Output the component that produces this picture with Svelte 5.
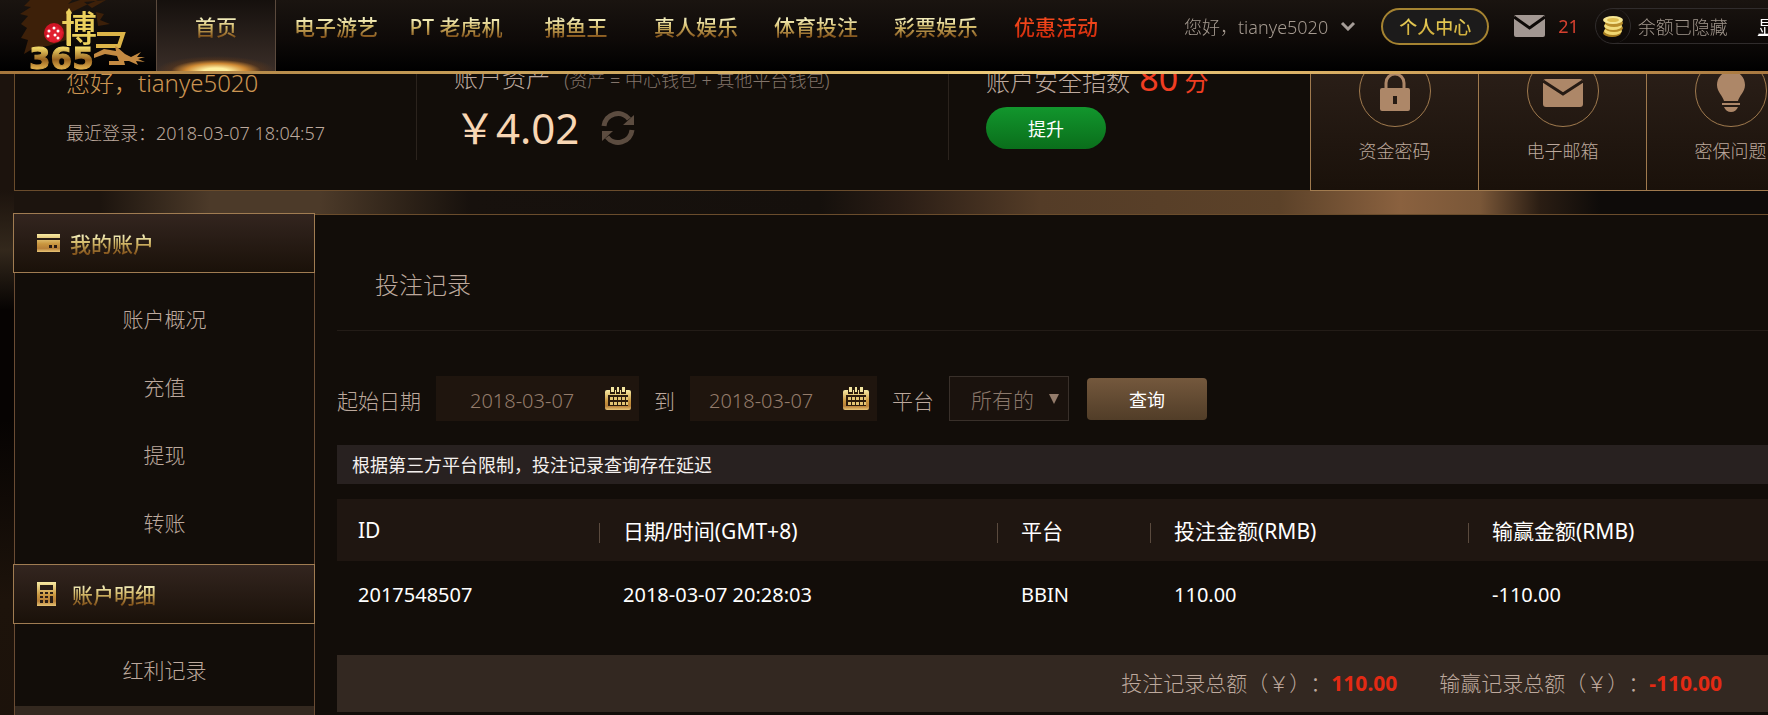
<script lang="ts">
  type MenuGroup = { icon: "card" | "calculator"; title: string; items: string[] };

  const navItems = [
    "首页",
    "电子游艺",
    "PT 老虎机",
    "捕鱼王",
    "真人娱乐",
    "体育投注",
    "彩票娱乐",
    "优惠活动",
  ];

  const securityTiles = [
    { icon: "lock", label: "资金密码" },
    { icon: "mail", label: "电子邮箱" },
    { icon: "bulb", label: "密保问题" },
  ];

  const menu: MenuGroup[] = [
    { icon: "card", title: "我的账户", items: ["账户概况", "充值", "提现", "转账"] },
    { icon: "calculator", title: "账户明细", items: ["红利记录", "投注记录"] },
  ];

  const columns = ["ID", "日期/时间(GMT+8)", "平台", "投注金额(RMB)", "输赢金额(RMB)"];

  const records = [
    { id: "2017548507", time: "2018-03-07 20:28:03", platform: "BBIN", bet: "110.00", win: "-110.00" },
  ];

  const username = "tianye5020";
  let activeNav = $state("首页");
  let activeMenu = $state("投注记录");
  let startDate = $state("2018-03-07");
  let endDate = $state("2018-03-07");
  let platform = $state("所有的");
</script>

{#snippet calendar()}
  <svg width="28" height="24" viewBox="0 0 28 24" aria-hidden="true">
    <rect x="1" y="3" width="26" height="20" rx="2" fill="url(#gold)" />
    <rect x="4" y="8" width="20" height="11" fill="#2b1b0c" />
    <g fill="#2b1b0c">
      <rect x="6" y="1" width="5" height="6" /><rect x="12" y="1" width="4" height="6" /><rect x="17" y="1" width="5" height="6" />
    </g>
    <g fill="#f3e5a0">
      <rect x="7" y="0" width="3" height="5" /><rect x="18" y="0" width="3" height="5" /><rect x="13" y="0" width="2" height="5" />
    </g>
    <g fill="#e3c473">
      {#each [0, 1, 2, 3] as col}
        <rect x={6 + col * 4} y="10" width="3" height="3" />
        <rect x={6 + col * 4} y="15" width="3" height="3" />
      {/each}
      <rect x="22" y="10" width="2" height="3" /><rect x="22" y="15" width="2" height="3" />
    </g>
  </svg>
{/snippet}

<header class="topbar">
  <a class="logo" href="#home" aria-label="博365">
    <svg width="156" height="71" viewBox="0 0 156 71">
      <defs>
        <linearGradient id="gold" x1="0" y1="0" x2="0" y2="1">
          <stop offset="0" stop-color="#f8eba4" />
          <stop offset="0.55" stop-color="#c9963f" />
          <stop offset="0.8" stop-color="#b77f38" />
          <stop offset="1" stop-color="#e8c576" />
        </linearGradient>
        <linearGradient id="digits" x1="0" y1="0" x2="0" y2="1">
          <stop offset="0.2" stop-color="#f5dc6a" />
          <stop offset="0.55" stop-color="#9a6420" />
          <stop offset="0.8" stop-color="#e2b04c" />
        </linearGradient>
      </defs>
      <path
        d="M30 0L24 6L31 7L20 14L28 16L21 24L27 28L21 38L28 40L24 54L34 48L48 46L66 40L72 12L84 6L98 0H80L68 4L72 0ZM96 12L104 14L100 20L110 24L98 26ZM84 2L106 0L92 8Z"
        fill="#3d2009"
      />
      <text x="61" y="42" class="logo-name" fill="#ecd05d">博</text>
      <path d="M67 14H71V46H67Z" fill="#ecd05d" />
      <path d="M69 8L72 13L69 16L66 13Z" fill="#ecd05d" />
      <path d="M97 34H123L119 46H96" fill="none" stroke="#dcb448" stroke-width="4" />
      <path
        d="M117 47L125 54L131 57L141 52L137 57L145 57L138 59L145 62L136 61L138 65L129 61H124L125 65H109V61H119L117 56L105 54L94 58V54L104 49L116 51L115 46Z"
        fill="#c48a42"
      />
      <text x="29" y="69" class="logo-digits" fill="url(#digits)" stroke="url(#digits)">365</text>
      <circle cx="54" cy="33" r="10" fill="#cf1424" />
      <path d="M46 30L57 26L63 32L60 41L50 42Z" fill="#ed2638" opacity="0.6" />
      <g fill="#fff">
        <circle cx="49" cy="31" r="1.5" /><circle cx="48" cy="36" r="1.5" /><circle cx="54" cy="28" r="1.5" />
        <circle cx="58" cy="31" r="1.5" /><circle cx="55" cy="35" r="1.5" /><circle cx="58" cy="38" r="1.5" />
      </g>
    </svg>
  </a>

  <nav class="nav">
    {#each navItems as item}
      <a
        href="#nav"
        class="nav-item"
        class:active={item === activeNav}
        class:promo={item === "优惠活动"}
        onclick={() => (activeNav = item)}><span>{item}</span></a
      >
    {/each}
  </nav>

  <div class="tools">
    <button class="user">
      <span>您好，{username}</span>
      <svg width="16" height="10" viewBox="0 0 16 10"><path d="M2 2L8 8L14 2" fill="none" stroke="#a59d98" stroke-width="3" /></svg>
    </button>
    <button class="center-btn"><span>个人中心</span></button>
    <a class="mail" href="#mail">
      <svg width="31" height="22" viewBox="0 0 31 22">
        <rect width="31" height="22" rx="2" fill="#a29792" />
        <path d="M0 2L15.500 13L31 2" fill="none" stroke="#0d0907" stroke-width="3" />
      </svg>
      <span>21</span>
    </a>
    <div class="balance">
      <span class="coin">
        <svg width="24" height="24" viewBox="0 0 24 24">
          <ellipse cx="11" cy="19" rx="9" ry="4" fill="#a87d20" />
          <ellipse cx="12" cy="17" rx="9" ry="4" fill="#f0d670" />
          <ellipse cx="13" cy="14" rx="9" ry="4" fill="#b58a28" />
          <ellipse cx="12" cy="12" rx="9" ry="4" fill="#f2dc7c" />
          <ellipse cx="13" cy="9" rx="9" ry="4" fill="#b98e2c" />
          <ellipse cx="12" cy="6" rx="10" ry="4" fill="#f6e694" />
          <ellipse cx="12" cy="6" rx="6" ry="2" fill="#dfbd50" />
        </svg>
      </span>
      <span>余额已隐藏</span>
      <button class="reveal">显示</button>
    </div>
  </div>
</header>

<div class="page">
  <section class="summary">
    <div class="profile">
      <div class="hello">您好，{username}</div>
      <div class="last-login">最近登录：2018-03-07 18:04:57</div>
    </div>

    <div class="assets">
      <div class="heading">账户资产 <small>(资产 = 中心钱包 + 其他平台钱包)</small></div>
      <div class="amount">
        <span>￥4.02</span>
        <button class="refresh" aria-label="刷新">
          <svg width="34" height="34" viewBox="0 0 34 34">
            <path d="M3 15A14 14 0 0 1 28 8M31 19A14 14 0 0 1 6 26" fill="none" stroke="#5c4c40" stroke-width="5" />
            <path d="M33 4V14H22ZM1 30V20H12Z" fill="#5c4c40" />
          </svg>
        </button>
      </div>
    </div>

    <div class="safety">
      <div class="heading">账户安全指数 <b>80</b> <i>分</i></div>
      <button class="upgrade">提升</button>
    </div>

    {#each securityTiles as tile}
      <a class="tile" href="#security">
        <span class="ring">
          <svg width="44" height="44" viewBox="0 0 44 44" fill="#ad8768">
            {#if tile.icon === "lock"}
              <path d="M13 20V14A9 9 0 0 1 31 14V20" fill="none" stroke="#ad8768" stroke-width="3" />
              <path fill-rule="evenodd" d="M9 19H35A2 2 0 0 1 37 21V40A2 2 0 0 1 35 42H9A2 2 0 0 1 7 40V21A2 2 0 0 1 9 19ZM20 27V35H24V27Z" />
            {:else if tile.icon === "mail"}
              <rect x="2" y="10" width="40" height="28" rx="3" />
              <path d="M2 12L22 25L42 12" fill="none" stroke="#261b14" stroke-width="3" />
            {:else}
              <path d="M22 2C13 2 8 9 8 16C8 23 14 27 15 32H29C30 27 36 23 36 16C36 9 31 2 22 2ZM13 34H31V36H13ZM15 38H29C28 41 25 43 22 43C19 43 16 41 15 38Z" />
            {/if}
          </svg>
        </span>
        <span>{tile.label}</span>
      </a>
    {/each}
  </section>

  <div class="body">
    <aside class="sidebar">
      {#each menu as group}
        <h2 class="menu-title {group.icon}">
          {#if group.icon === "card"}
            <svg width="23" height="18" viewBox="0 0 23 18">
              <path d="M0 0H23V4H0ZM0 6H23V18H0Z" fill="url(#gold)" />
              <path d="M12 11H15V14H12ZM17 11H20V14H17Z" fill="#2a1b12" />
            </svg>
          {:else}
            <svg width="19" height="24" viewBox="0 0 19 24">
              <rect width="19" height="24" fill="url(#gold)" />
              <path d="M3 3H16V8H3ZM3 10H6V12H3ZM8 10H11V12H8ZM13 10H16V12H13ZM3 14H6V16H3ZM8 14H11V16H8ZM3 18H6V21H3ZM8 18H11V21H8ZM13 14H16V21H13Z" fill="#2a1e16" />
            </svg>
          {/if}
          <span>{group.title}</span>
        </h2>
        <ul>
          {#each group.items as item}
            <li class:current={item === activeMenu}>
              <a href="#menu" onclick={() => (activeMenu = item)}>{item}</a>
            </li>
          {/each}
        </ul>
      {/each}
    </aside>

    <main class="content">
      <h1>投注记录</h1>

      <form class="filters" onsubmit={(e) => e.preventDefault()}>
        <label for="start">起始日期</label>
        <div class="date-field wide">
          <input id="start" type="text" bind:value={startDate} />
          {@render calendar()}
        </div>
        <label for="end">到</label>
        <div class="date-field">
          <input id="end" type="text" bind:value={endDate} />
          {@render calendar()}
        </div>
        <label for="platform">平台</label>
        <div class="select-field">
          <select id="platform" bind:value={platform}>
            <option>所有的</option>
            <option>BBIN</option>
          </select>
        </div>
        <button class="search" type="submit">查询</button>
      </form>

      <p class="notice">根据第三方平台限制，投注记录查询存在延迟</p>

      <table>
        <colgroup>
          <col class="c-id" /><col class="c-time" /><col class="c-platform" /><col class="c-bet" /><col />
        </colgroup>
        <thead>
          <tr>
            {#each columns as column}
              <th>{column}</th>
            {/each}
          </tr>
        </thead>
        <tbody>
          {#each records as record}
            <tr>
              <td>{record.id}</td>
              <td>{record.time}</td>
              <td>{record.platform}</td>
              <td>{record.bet}</td>
              <td>{record.win}</td>
            </tr>
          {/each}
        </tbody>
      </table>

      <div class="totals">
        <span>投注记录总额（￥）：<b>110.00</b></span>
        <span>输赢记录总额（￥）：<b>-110.00</b></span>
      </div>
    </main>
  </div>
</div>

<style>
  :global(body) {
    overflow: hidden;
    background:
      linear-gradient(#1c130d 190px, #33281c 250px, #060302 310px, #060302 420px, #1d130b 600px, #1a110b) 0 0 / 14px 100% no-repeat,
      linear-gradient(90deg, #1c140e 100px, #4c3a29 210px, #4c3a29 320px, #2c2117 410px, #17110d 470px, #15100c 820px, #2a1d15 900px, #543c27 1040px, #5c4229 1280px, #8a613f 1400px, #7a5738 1480px, #2a1d13 1540px, #0e0b09 1600px);
  }

  :global(body),
  button,
  input,
  select {
    font-family: "Noto Sans", "Noto Sans CJK SC", sans-serif;
    font-weight: 300;
  }

  a {
    color: inherit;
    text-decoration: none;
  }

  button {
    padding: 0;
    border: 0;
    background: transparent;
    color: inherit;
    cursor: pointer;
  }

  svg {
    display: block;
    flex: none;
  }

  .topbar {
    position: fixed;
    inset: 0 0 auto;
    z-index: 10;
    display: flex;
    height: 71px;
    overflow: hidden;
    white-space: nowrap;
    background: linear-gradient(#1a1410, #0e0a08 55%, #000);
    border-bottom: 3px solid;
    border-image: linear-gradient(90deg, #a5763c, #c39a55 25%, #f0ce7e 60%, #c89852 85%, #a87840) 1;
  }

  .logo-name {
    font-size: 36px;
    font-weight: 500;
  }

  .logo-digits {
    font-family: "DejaVu Sans", sans-serif;
    font-size: 31px;
    font-weight: 700;
  }

  .nav {
    display: flex;
  }

  .nav-item {
    flex: none;
    box-sizing: border-box;
    width: 120px;
    padding-top: 11px;
    font-size: 21px;
    font-weight: 500;
    line-height: 32px;
    text-align: center;
  }

  .nav-item span,
  .center-btn span,
  .menu-title span {
    color: transparent;
    background: linear-gradient(#f2ecb8 25%, #d3b968 50%, #85551c 85%);
    background-clip: text;
  }

  .nav-item.active {
    border: solid #5b4a3d;
    border-width: 0 1px;
    background:
      radial-gradient(ellipse 60px 15px at 50% 100%, #fff0a0 20%, #d08a34 50%, #6a3d1866 75%, transparent),
      linear-gradient(#15100d, #3a2e28);
  }

  .nav-item.promo span {
    background: linear-gradient(#f4481c 30%, #c92408);
    background-clip: text;
  }

  .tools {
    display: flex;
    align-items: center;
    height: 52px;
    margin-left: 68px;
    font-size: 18px;
    color: #a4998f;
  }

  .user {
    display: flex;
    align-items: center;
    gap: 12px;
    font-size: 18px;
  }

  .center-btn {
    flex: none;
    width: 108px;
    height: 37px;
    margin: 0 25px;
    border: 2px solid #a58331;
    border-radius: 19px;
    background: #1c1b1b;
    font-size: 18px;
    font-weight: 500;
  }

  .center-btn span {
    background: linear-gradient(#f0d860, #c9a535);
    background-clip: text;
  }

  .mail {
    display: flex;
    align-items: center;
    gap: 13px;
    font-weight: 400;
    color: #d5402f;
  }

  .balance {
    display: flex;
    align-items: center;
    width: 240px;
    height: 34px;
    margin-left: 16px;
    border: 1px solid #302c2c;
    border-radius: 18px;
  }

  .coin {
    display: grid;
    place-items: center;
    width: 34px;
    height: 34px;
    margin-right: 7px;
    border-right: 1px solid #302c2c;
    border-radius: 18px;
  }

  .reveal {
    margin-left: 30px;
    font-size: 18px;
    font-weight: 400;
    color: #fff;
    text-decoration: underline;
  }

  .page {
    padding-left: 14px;
    overflow: hidden;
  }

  .summary {
    display: grid;
    grid-template-columns: 402px 532px 361px repeat(3, 168px);
    height: 190px;
    border: solid #6a4c2c;
    border-width: 0 0 1px 1px;
    background: #120d09;
    color: #bda99d;
    white-space: nowrap;
  }

  .profile,
  .assets {
    height: 160px;
    border-right: 1px solid #2b231d;
  }

  .profile {
    padding-left: 51px;
    box-sizing: border-box;
  }

  .hello {
    padding-top: 65px;
    font-size: 24px;
    line-height: 36px;
    color: #cc9552;
  }

  .last-login {
    margin-top: 18px;
    font-size: 18px;
    line-height: 28px;
  }

  .heading {
    height: 36px;
    padding-top: 60px;
    font-size: 24px;
    line-height: 36px;
  }

  .heading small {
    margin-left: 8px;
    font-size: 18px;
    color: #83756b;
  }

  .assets,
  .safety {
    box-sizing: border-box;
    padding-left: 37px;
  }

  .amount {
    display: flex;
    align-items: center;
    gap: 22px;
    height: 64px;
    font-size: 42px;
    font-weight: 400;
    color: #f8d6b4;
  }

  .amount span {
    padding-bottom: 6px;
  }

  .heading b {
    margin-left: 3px;
    font-size: 34px;
    font-weight: 400;
    color: #f03e22;
  }

  .heading i {
    font-style: normal;
    font-weight: 400;
    color: #f03e22;
  }

  .upgrade {
    display: block;
    width: 120px;
    height: 42px;
    margin-top: 11px;
    border-radius: 21px;
    background: linear-gradient(#12962d, #0a6e1b);
    font-size: 18px;
    font-weight: 400;
    color: #fff;
  }

  .tile {
    display: flex;
    flex-direction: column;
    align-items: center;
    gap: 10px;
    box-sizing: border-box;
    height: 190px;
    padding-top: 55px;
    border-left: 1px solid #a07a4e;
    background: linear-gradient(#33261f, #1a110a);
    font-size: 18px;
    line-height: 28px;
    box-shadow: 0 1px #a07a4e;
  }

  .ring {
    display: grid;
    place-items: center;
    box-sizing: border-box;
    width: 72px;
    height: 72px;
    border: 1px solid #a07a4e;
    border-radius: 50%;
  }

  .body {
    display: flex;
    margin-top: 23px;
    min-height: 100vh;
    border-top: 1px solid #6a4c2c;
    background: #120d09;
  }

  .sidebar {
    flex: none;
    box-sizing: border-box;
    width: 301px;
    border: solid #6a4c34;
    border-width: 0 1px;
  }

  .menu-title {
    display: flex;
    align-items: center;
    gap: 10px;
    box-sizing: border-box;
    height: 60px;
    margin: -2px -1px 0 -2px;
    padding-left: 23px;
    border: 1px solid #a07c52;
    background: linear-gradient(#33251f, #1a1109);
    font-size: 21px;
    font-weight: 500;
  }

  .menu-title.calculator {
    gap: 16px;
  }

  ul {
    margin: 0;
    padding: 12px 0 9px;
    list-style: none;
  }

  li {
    font-size: 21px;
    line-height: 68px;
    text-align: center;
    color: #bda99d;
  }

  li a {
    display: block;
  }

  .current {
    margin-top: 2px;
    background: #33281f;
  }

  .content {
    flex: 1;
    min-width: 0;
    padding-left: 22px;
    color: #bda99d;
  }

  h1 {
    margin: 0 0 45px;
    padding: 51px 0 27px 38px;
    border-bottom: 1px solid #231c17;
    font-size: 24px;
    font-weight: 300;
    line-height: 37px;
  }

  .filters {
    display: flex;
    align-items: center;
    font-size: 21px;
  }

  .filters label {
    padding-top: 2px;
  }

  .date-field {
    display: flex;
    align-items: center;
    height: 45px;
    margin: 0 15px;
    padding-right: 7px;
    background: #1f150e;
  }

  .date-field input {
    box-sizing: border-box;
    width: 152px;
    height: 45px;
    padding: 4px 0 0 19px;
    border: 0;
    background: transparent;
    font-size: 20px;
    color: #947c6b;
  }

  .date-field.wide input {
    width: 168px;
    padding-left: 34px;
  }

  .select-field {
    position: relative;
    margin: 0 18px 0 15px;
  }

  .select-field::after {
    content: "";
    position: absolute;
    top: 18px;
    right: 10px;
    border: solid transparent;
    border-width: 10px 5px 0;
    border-top-color: #947c6b;
    pointer-events: none;
  }

  select {
    appearance: none;
    width: 120px;
    height: 45px;
    padding: 2px 0 0 21px;
    border: 1px solid #39302a;
    border-radius: 0;
    background: #1a120d;
    font-size: 21px;
    color: #8a786b;
  }

  .search {
    width: 120px;
    height: 42px;
    border-radius: 4px;
    background: linear-gradient(#74583d, #513d28);
    font-size: 18px;
    font-weight: 400;
    color: #fff;
  }

  .notice {
    margin: 24px 0 15px;
    padding: 6px 15px 5px;
    background: #282120;
    font-size: 18px;
    font-weight: 400;
    line-height: 28px;
    color: #f4f0ee;
  }

  table {
    width: 100%;
    table-layout: fixed;
    border-collapse: collapse;
    color: #fff;
  }

  .c-id {
    width: 262px;
  }

  .c-time {
    width: 398px;
  }

  .c-platform {
    width: 153px;
  }

  .c-bet {
    width: 318px;
  }

  th,
  td {
    padding: 0 0 0 24px;
    font-weight: 400;
    text-align: left;
    white-space: nowrap;
  }

  th {
    height: 62px;
    background: linear-gradient(#5a4a3e, #5a4a3e) 0 24px / 1px 20px no-repeat #1f1611;
    font-size: 21px;
  }

  th:first-child {
    background: #1f1611;
  }

  th:first-child,
  td:first-child {
    padding-left: 21px;
  }

  td {
    height: 66px;
    font-size: 20px;
  }

  .totals {
    display: flex;
    justify-content: flex-end;
    gap: 42px;
    margin-top: 28px;
    padding: 12px 46px 13px 0;
    background: #332821;
    font-size: 21px;
    line-height: 32px;
    text-spacing-trim: space-all;
  }

  .totals b {
    font-weight: 700;
    color: #e32a14;
  }
</style>
